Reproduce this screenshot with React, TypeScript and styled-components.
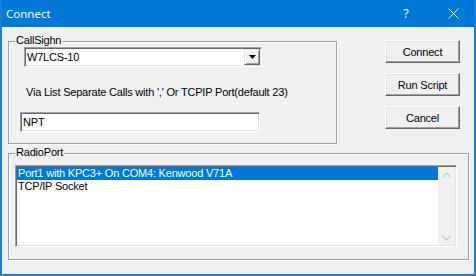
import React from "react";
import styled, { createGlobalStyle } from "styled-components";

const GlobalStyle = createGlobalStyle`
  html, body {
    margin: 0;
    padding: 0;
    background: #f0f0f0;
  }
  * {
    box-sizing: border-box;
  }
`;

const Window = styled.div`
  width: 476px;
  height: 276px;
  display: flex;
  flex-direction: column;
  border: 2px solid #1a7fd5;
  border-top: none;
  background: #f0f0f0;
  font-family: "Liberation Sans", Arial, sans-serif;
  font-size: 11px;
  letter-spacing: -0.2px;
  color: #000;
`;

const TitleBar = styled.div`
  height: 27px;
  flex: none;
  display: flex;
  align-items: center;
  background: #0078d7;
  color: #fff;
  font-family: "Noto Sans", sans-serif;
  letter-spacing: 0;
`;

const Title = styled.span`
  flex: 1;
  padding-left: 4px;
  font-size: 11.5px;
`;

const CaptionButton = styled.div<{ $w: number }>`
  width: ${p => p.$w}px;
  height: 27px;
  display: flex;
  align-items: center;
  justify-content: center;
  font-size: 12px;
`;

const Body = styled.div`
  flex: 1;
  padding: 13px 0 0 6px;
`;

const TopRow = styled.div`
  display: flex;
  align-items: flex-start;
`;

const GroupBox = styled.div<{ $w: number; $h: number; $top: number }>`
  position: relative;
  width: ${p => p.$w}px;
  height: ${p => p.$h}px;
  margin-top: ${p => p.$top}px;
  border: 1px solid #a0a0a0;
  box-shadow: inset 1px 1px #fff, 1px 1px #fff;
`;

const Caption = styled.span`
  position: absolute;
  top: -8px;
  left: 6px;
  padding: 0 1px;
  line-height: 13px;
  background: #f0f0f0;
`;

const CallPane = styled.div`
  display: flex;
  flex-direction: column;
  align-items: flex-start;
  padding: 5px 0 0 11px;
`;

const Field = styled.div<{ $w: number }>`
  width: ${p => p.$w}px;
  height: 20px;
  display: flex;
  align-items: center;
  background: #fff;
  border: 1px solid;
  border-color: #a0a0a0 #fff #fff #a0a0a0;
  box-shadow: inset 1px 1px #696969, inset -1px -1px #e3e3e3;
  padding: 1px 1px 1px 2px;
  line-height: 13px;
`;

const ComboField = styled(Field)`
  margin-left: 4px;
`;

const FieldText = styled.span`
  flex: 1;
`;

const DropButton = styled.div`
  width: 16px;
  align-self: stretch;
  display: flex;
  align-items: center;
  justify-content: center;
  background: #f0f0f0;
  border: 1px solid;
  border-color: #e3e3e3 #696969 #696969 #e3e3e3;
  box-shadow: inset 1px 1px #fff, inset -1px -1px #a0a0a0;
`;

const Hint = styled.div`
  margin: 19px 0 13px 6px;
  line-height: 13px;
  white-space: nowrap;
`;

const ButtonColumn = styled.div`
  display: flex;
  flex-direction: column;
  gap: 10px;
  margin-left: 48px;
`;

const PushButton = styled.div`
  width: 75px;
  height: 23px;
  display: flex;
  align-items: center;
  justify-content: center;
  background: #f0f0f0;
  border: 1px solid;
  border-color: #fff #696969 #696969 #fff;
  box-shadow: inset -1px -1px #a0a0a0, inset 1px 1px #e3e3e3;
`;

const PortPane = styled.div`
  padding: 11px 0 0 6px;
`;

const ListBox = styled.div`
  width: 442px;
  height: 82px;
  display: flex;
  background: #fff;
  border: 1px solid;
  border-color: #a0a0a0 #fff #fff #a0a0a0;
  box-shadow: inset 1px 1px #696969, inset -1px -1px #e3e3e3;
  padding: 1px;
`;

const Items = styled.div`
  flex: 1;
`;

const Item = styled.div<{ $selected?: boolean }>`
  height: 13px;
  line-height: 13px;
  padding-left: 1px;
  white-space: nowrap;
  background: ${p => (p.$selected ? "#0078d7" : "transparent")};
  color: ${p => (p.$selected ? "#fff" : "#000")};
`;

const ScrollBar = styled.div`
  width: 17px;
  display: flex;
  flex-direction: column;
  justify-content: space-between;
  align-items: center;
  background: #f0f0f0;
  padding: 5px 0 4px;
`;

const Chevron = ({ up }: { up?: boolean }) => (
  <svg width="9" height="6" viewBox="0 0 9 6">
    <path
      d={up ? "M0.5 5 L4.5 1 L8.5 5" : "M0.5 1 L4.5 5 L8.5 1"}
      fill="none"
      stroke="#c4c4c4"
      strokeWidth="1.2"
    />
  </svg>
);

const ports = [
  "Port1 with KPC3+ On COM4: Kenwood V71A",
  "TCP/IP Socket"
];

export default function App() {
  return (
    <>
      <GlobalStyle />
      <Window>
        <TitleBar>
          <Title>Connect</Title>
          <CaptionButton $w={30}>?</CaptionButton>
          <CaptionButton $w={11} />
          <CaptionButton $w={42}>
            <svg width="11" height="11" viewBox="0 0 11 11">
              <path d="M0.5 0.5 L10.5 10.5 M10.5 0.5 L0.5 10.5" stroke="#fff" strokeWidth="1" />
            </svg>
          </CaptionButton>
        </TitleBar>
        <Body>
          <TopRow>
            <GroupBox $w={329} $h={103} $top={1}>
              <Caption>CallSighn</Caption>
              <CallPane>
                <ComboField $w={238}>
                  <FieldText>W7LCS-10</FieldText>
                  <DropButton>
                    <svg width="7" height="4" viewBox="0 0 7 4">
                      <path d="M0 0 H7 L3.5 4 Z" fill="#000" />
                    </svg>
                  </DropButton>
                </ComboField>
                <Hint>Via List Separate Calls with ',' Or TCPIP Port(default 23)</Hint>
                <Field $w={240}>
                  <FieldText>NPT</FieldText>
                </Field>
              </CallPane>
            </GroupBox>
            <ButtonColumn>
              <PushButton>Connect</PushButton>
              <PushButton>Run Script</PushButton>
              <PushButton>Cancel</PushButton>
            </ButtonColumn>
          </TopRow>
          <GroupBox $w={461} $h={107} $top={9}>
            <Caption>RadioPort</Caption>
            <PortPane>
              <ListBox>
                <Items>
                  {ports.map((p, i) => (
                    <Item key={p} $selected={i === 0}>{p}</Item>
                  ))}
                </Items>
                <ScrollBar>
                  <Chevron up />
                  <Chevron />
                </ScrollBar>
              </ListBox>
            </PortPane>
          </GroupBox>
        </Body>
      </Window>
    </>
  );
}
